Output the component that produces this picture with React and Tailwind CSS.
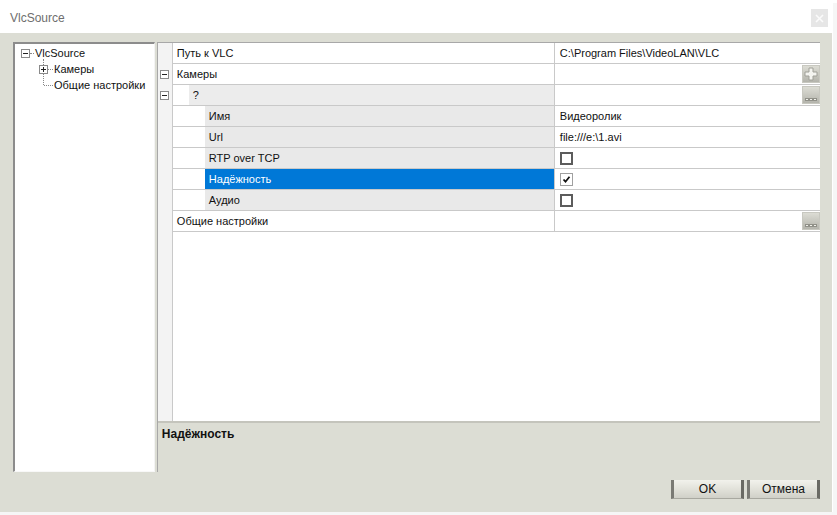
import React from "react";

const font = { fontFamily: '"Liberation Sans", Arial, sans-serif' };

function MinusBox() {
  return (
    <div className="w-[9px] h-[9px] border border-[#8a8a8a] bg-white flex items-center justify-center">
      <div className="w-[5px] h-[1px] bg-[#222]" />
    </div>
  );
}

function PlusBox() {
  return (
    <div className="w-[9px] h-[9px] border border-[#8a8a8a] bg-white relative">
      <div className="absolute left-[1px] top-[3px] w-[5px] h-[1px] bg-[#222]" />
      <div className="absolute left-[3px] top-[1px] w-[1px] h-[5px] bg-[#222]" />
    </div>
  );
}

function GridButton({ kind }) {
  return (
    <div className="w-[18px] h-[18px] border border-[#c8c8c0] bg-gradient-to-b from-[#dcdcd4] to-[#b4b4ac] relative self-end mb-[1px]">
      {kind === "plus" ? (
        <svg width="16" height="16" viewBox="0 0 16 16" className="absolute left-0 top-0">
          <path d="M6 2h4v4h4v4h-4v4H6v-4H2V6h4z" fill="#f4f4f0" stroke="#a0a098" strokeWidth="1" />
        </svg>
      ) : (
        <svg width="16" height="16" viewBox="0 0 16 16" className="absolute left-0 top-0">
          <rect x="2.5" y="11.5" width="3" height="2" fill="#f0f0ea" stroke="#909088" strokeWidth="1" />
          <rect x="6.5" y="11.5" width="3" height="2" fill="#f0f0ea" stroke="#909088" strokeWidth="1" />
          <rect x="10.5" y="11.5" width="3" height="2" fill="#f0f0ea" stroke="#909088" strokeWidth="1" />
        </svg>
      )}
    </div>
  );
}

function Checkbox({ checked }) {
  if (checked) {
    return (
      <div className="w-[13px] h-[13px] border border-[#a0a0a0] bg-white relative">
        <svg width="11" height="11" viewBox="0 0 11 11" className="absolute left-0 top-0">
          <path d="M2.5 5.5l2 2.2 4-5" fill="none" stroke="#111" strokeWidth="1.8" />
        </svg>
      </div>
    );
  }
  return <div className="w-[13px] h-[13px] border-2 border-[#5c5c5c] bg-white" />;
}

function Row({ gutter, indent, nameBg, name, selected, value, button }) {
  return (
    <div className="flex h-[21px]">
      <div className="w-[15px] shrink-0 bg-[#f3f3f3] border-r border-[#c9c9c9] flex items-center justify-center pb-[1px]">
        {gutter === "minus" ? <MinusBox /> : null}
      </div>
      <div className="w-[382px] shrink-0 flex border-r border-b border-[#c9c9c9]">
        <div className={indent} />
        <div
          className={
            "flex-1 flex items-center pl-[4px] text-[11px] " +
            (selected ? "bg-[#0078d7] text-white" : nameBg + " text-[#111]")
          }
        >
          {name}
        </div>
      </div>
      <div className="flex-1 flex items-center pl-[5px] bg-white text-[11px] text-[#111] border-b border-[#c9c9c9]">
        <div className="flex-1 flex items-center h-full">{value}</div>
        {button ? <GridButton kind={button} /> : null}
      </div>
    </div>
  );
}

export default function App() {
  return (
    <div className="w-[837px] h-[515px] bg-[#f6f6f6] overflow-hidden" style={font}>
      <div className="h-[3px] bg-white" />
      <div className="w-[833px] h-[509px] flex flex-col bg-[#dcddd4] border-r border-[#ffffff]">
        {/* title bar */}
        <div className="h-[30px] shrink-0 bg-white flex items-center pl-[10px] pr-[4px] relative">
          <span className="text-[12px] text-[#6e6e6e]">VlcSource</span>
          <div className="ml-auto w-[17px] h-[18px] bg-[#e6e6e6] flex items-center justify-center">
            <svg width="9" height="9" viewBox="0 0 9 9">
              <path d="M1 1l7 7M8 1l-7 7" stroke="#fbfbfb" strokeWidth="1.6" />
            </svg>
          </div>
        </div>

        {/* body */}
        <div className="flex gap-[2px] pl-[13px] pr-[12px] pt-[9px] h-[439px] shrink-0">
          {/* tree */}
          <div className="w-[142px] h-full bg-white border-l-2 border-t-2 border-[#8c8c8c] border-r border-b border-r-[#f4f4f4] border-b-[#f8f8f8] relative text-[11px] leading-[14px] text-[#111]">
            <div className="absolute left-[6px] top-[5px]">
              <MinusBox />
            </div>
            <div className="absolute left-[15px] top-[9px] w-[4px] border-t border-dotted border-[#888]" />
            <div className="absolute left-[20px] top-[2px]">VlcSource</div>
            <div className="absolute left-[28px] top-[15px] h-[26px] border-l border-dotted border-[#888]" />
            <div className="absolute left-[24px] top-[21px]">
              <PlusBox />
            </div>
            <div className="absolute left-[33px] top-[25px] w-[5px] border-t border-dotted border-[#888]" />
            <div className="absolute left-[39px] top-[18px]">Камеры</div>
            <div className="absolute left-[29px] top-[41px] w-[9px] border-t border-dotted border-[#888]" />
            <div className="absolute left-[39px] top-[34px]">Общие настройки</div>
          </div>

          {/* property grid */}
          <div className="w-[664px] h-full flex flex-col border-t border-l border-[#a8a8a8]">
            <div className="h-[378px] shrink-0 bg-white flex flex-col">
              <Row name="Путь к VLC" nameBg="bg-white" indent="w-0" value="C:\Program Files\VideoLAN\VLC" />
              <Row gutter="minus" name="Камеры" nameBg="bg-white" indent="w-0" button="plus" />
              <Row gutter="minus" name="?" nameBg="bg-[#ececec]" indent="w-[16px] bg-white" button="dots" />
              <Row name="Имя" nameBg="bg-[#e9e9e9]" indent="w-[32px] bg-white" value="Видеоролик" />
              <Row name="Url" nameBg="bg-[#e9e9e9]" indent="w-[32px] bg-white" value="file:///e:\1.avi" />
              <Row name="RTP over TCP" nameBg="bg-[#e9e9e9]" indent="w-[32px] bg-white" value={<Checkbox />} />
              <Row name="Надёжность" selected indent="w-[32px] bg-white" value={<Checkbox checked />} />
              <Row name="Аудио" nameBg="bg-[#e9e9e9]" indent="w-[32px] bg-white" value={<Checkbox />} />
              <Row name="Общие настройки" nameBg="bg-white" indent="w-0" button="dots" />
              <div className="flex-1 flex">
                <div className="w-[15px] bg-[#f3f3f3] border-r border-[#c9c9c9]" />
                <div className="flex-1 bg-white" />
              </div>
            </div>
            <div className="flex-1 border-t-2 border-[#c4c4bc] bg-[#dcddd4] pl-[4px] pt-[3px] leading-[14px]">
              <span className="text-[12px] font-bold text-[#111]">Надёжность</span>
            </div>
          </div>
        </div>

        {/* buttons */}
        <div className="flex justify-end gap-[3px] pr-[12px] pt-[8px]">
          <div className="w-[73px] h-[19px] flex items-center justify-center text-[12px] text-[#111] bg-gradient-to-b from-[#f2f2ec] via-[#e2e2da] to-[#d0d0c8] border-l-[3px] border-r-[3px] border-l-[#7a7a74] border-r-[#6a6a64] border-b border-b-[#a8a8a0]">
            OK
          </div>
          <div className="w-[73px] h-[19px] flex items-center justify-center text-[12px] text-[#111] bg-gradient-to-b from-[#f2f2ec] via-[#e2e2da] to-[#d0d0c8] border-l-[3px] border-r-[3px] border-l-[#7a7a74] border-r-[#6a6a64] border-b border-b-[#a8a8a0]">
            Отмена
          </div>
        </div>
      </div>
    </div>
  );
}
